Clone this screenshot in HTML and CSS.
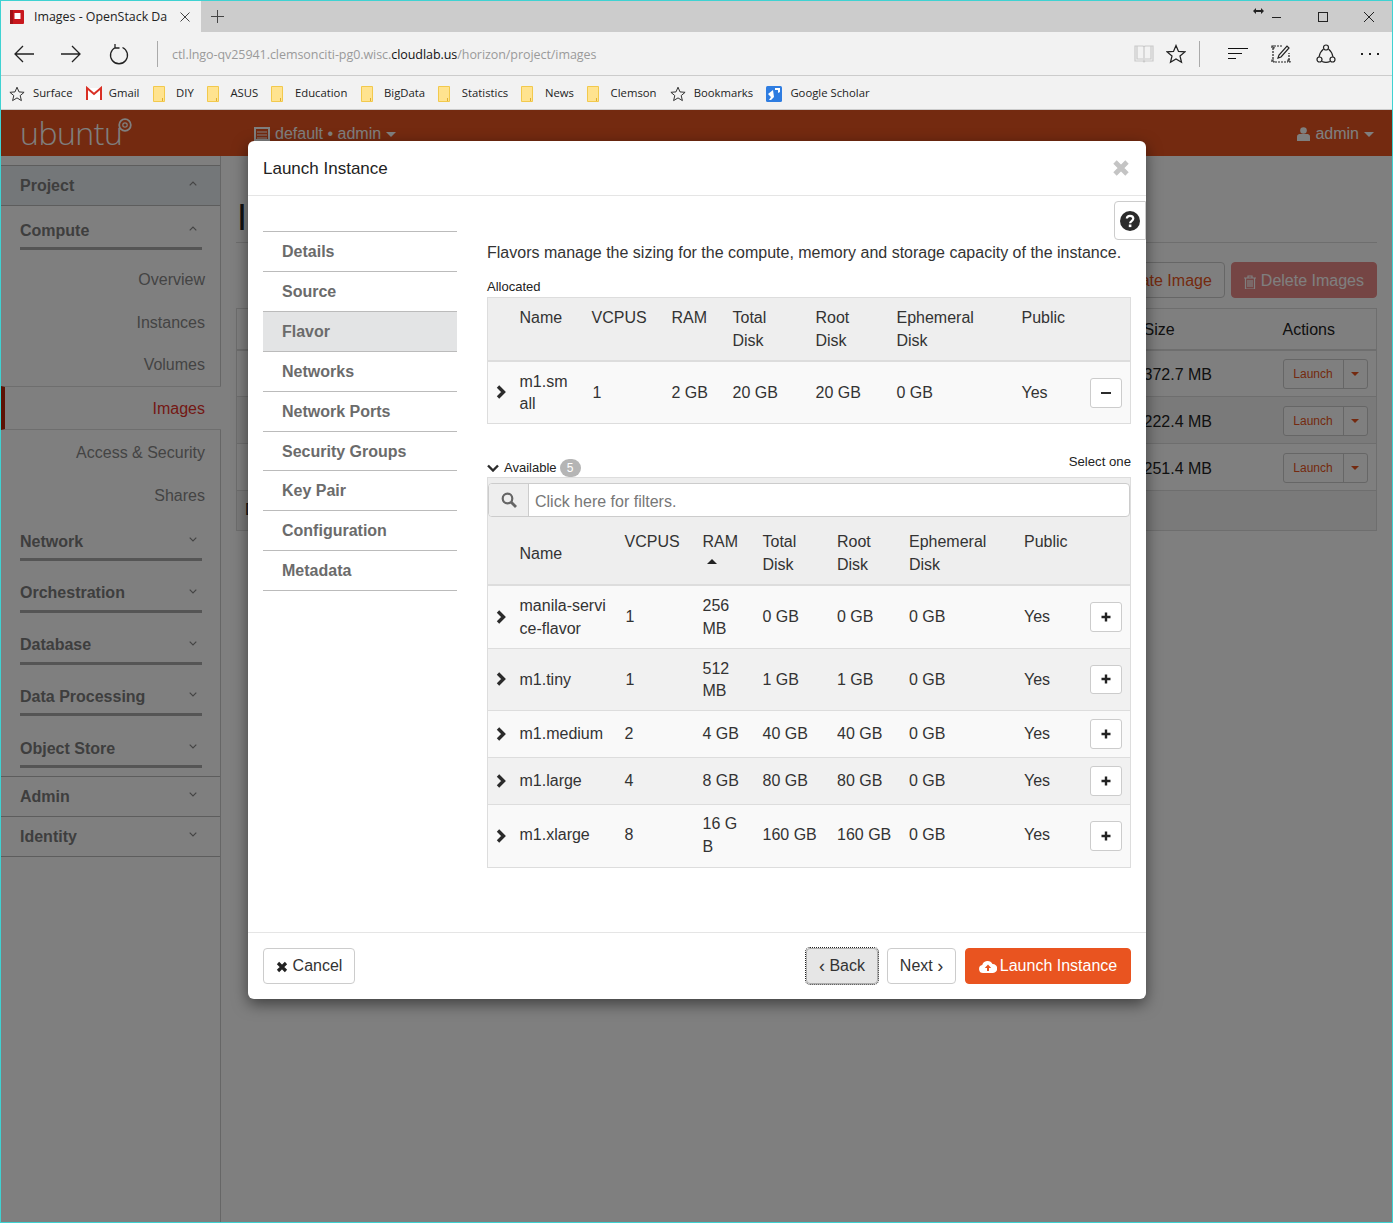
FILE: index.html
```html
<!DOCTYPE html>
<html lang="en">
<head>
<meta charset="utf-8">
<title>Images - OpenStack Dashboard</title>
<link rel="stylesheet" href="styles.css">
</head>
<body>
<svg class="defs" width="0" height="0" aria-hidden="true">
  <defs>
    <symbol id="star" viewBox="0 0 16 16"><path d="M8 1.2l2 4.7 5.1.4-3.9 3.3 1.2 5L8 11.9l-4.4 2.7 1.2-5L.9 6.3 6 5.9z" fill="none" stroke="currentColor" stroke-width="1"/></symbol>
    <symbol id="folder" viewBox="0 0 12 16"><path d="M.5.5h11v15H.5z" fill="#ffe38f" stroke="#f2c94c"/><path d="M9.5 15v-3" stroke="#e0b030" stroke-width="1"/></symbol>
    <symbol id="chev" viewBox="0 0 10 14"><path d="M2 1.5L7.5 7 2 12.5" fill="none" stroke="currentColor" stroke-width="3.400"/></symbol>
    <symbol id="plus" viewBox="0 0 10 10"><path d="M5 .5v9M.5 5h9" stroke="currentColor" stroke-width="2.400"/></symbol>
    <symbol id="caret" viewBox="0 0 10 5"><path d="M0 0h10L5 5z" fill="currentColor"/></symbol>
    <symbol id="caret-up" viewBox="0 0 10 5"><path d="M0 5h10L5 0z" fill="currentColor"/></symbol>
    <symbol id="times" viewBox="0 0 12 12"><path d="M2 2l8 8M10 2l-8 8" stroke="currentColor" stroke-width="3.2" fill="none"/></symbol>
    <symbol id="angle-up" viewBox="0 0 8 5"><path d="M.7 4.3L4 1l3.300 3.300" fill="none" stroke="currentColor" stroke-width="1.200"/></symbol>
    <symbol id="angle-down" viewBox="0 0 8 5"><path d="M.7.7L4 4 7.300.7" fill="none" stroke="currentColor" stroke-width="1.200"/></symbol>
  </defs>
</svg>
<div class="window">
  <header class="tabbar">
    <div class="tab">
      <svg class="favicon" viewBox="0 0 14 14"><rect width="14" height="14" rx="1" fill="#c8171d"/><rect y="0" width="3" height="14" fill="#a01216"/><rect x="4.500" y="3" width="6" height="6" fill="#fff"/></svg>
      <span class="tab-title">Images - OpenStack Da</span>
      <svg class="tab-close" viewBox="0 0 10 10"><path d="M.5.5l9 9M9.500.5l-9 9" stroke="#444" fill="none"/></svg>
    </div>
    <svg class="tab-new" viewBox="0 0 13 13"><path d="M6.500 0v13M0 6.500h13" stroke="#444" fill="none"/></svg>
    <div class="win-controls">
      <svg class="win-resize" viewBox="0 0 11 6"><path d="M0 3l3-3v2h5V0l3 3-3 3V4H3v2z" fill="#222"/></svg>
      <svg class="win-btn" viewBox="0 0 12 12"><path d="M1 6.500h9" stroke="#222" fill="none"/></svg>
      <svg class="win-btn" viewBox="0 0 12 12"><rect x="1.500" y="1.500" width="9" height="9" stroke="#222" fill="none"/></svg>
      <svg class="win-btn" viewBox="0 0 12 12"><path d="M1 1l10 10M11 1L1 11" stroke="#222" fill="none"/></svg>
    </div>
  </header>
  <div class="toolbar">
    <svg class="tool nav-back" viewBox="0 0 22 20"><path d="M21 10H2M10 2l-8 8 8 8" fill="none" stroke="#222" stroke-width="1.300"/></svg>
    <svg class="tool nav-fwd" viewBox="0 0 22 20"><path d="M1 10h19M12 2l8 8-8 8" fill="none" stroke="#222" stroke-width="1.300"/></svg>
    <svg class="tool nav-reload" viewBox="0 0 20 22"><path d="M6.500 4.500a8.500 8.500 0 1 0 7 0M6 1v4h4.500" fill="none" stroke="#222" stroke-width="1.300"/></svg>
    <span class="tool-sep sep-url"></span>
    <div class="url"><span>ctl.lngo-qv25941.clemsonciti-pg0.wisc.</span><span class="url-host">cloudlab.us</span><span>/horizon/project/images</span></div>
    <svg class="tool tool-book" viewBox="0 0 20 20"><path d="M1 2h8l1 1 1-1h8v15h-8l-1 1-1-1H1zM10 3v14M3 2v13h6M17 2v13h-6" fill="none" stroke="#c9c9c9" stroke-width="1.200"/></svg>
    <svg class="tool tool-star"><use href="#star"/></svg>
    <span class="tool-sep sep-hub"></span>
    <svg class="tool tool-hub" viewBox="0 0 20 14"><path d="M0 1.500h20M0 6.500h14M0 11.500h8" fill="none" stroke="#111" stroke-width="1"/></svg>
    <svg class="tool tool-note" viewBox="0 0 20 20"><path d="M1 2h2v2H1zM1 16h2v2H1zM17 16h2v2h-2zM2 4v12M4 18h13M18 16V9M3 2h9" fill="none" stroke="#222" stroke-width="1.200" stroke-dasharray="2 1"/><path d="M7 14l1-3 8-9 2 2-8 9z" fill="none" stroke="#222" stroke-width="1.200"/></svg>
    <svg class="tool tool-share" viewBox="0 0 20 20"><path d="M7.500 5C5 7 3.500 10 3 13M12.500 5c2.500 2 4 5 4.500 8M6 17.500c2.500 1 5.500 1 8 0" fill="none" stroke="#222" stroke-width="1.200"/><circle cx="10" cy="3.500" r="2.500" fill="none" stroke="#222" stroke-width="1.200"/><circle cx="3.500" cy="15.500" r="2.500" fill="none" stroke="#222" stroke-width="1.200"/><circle cx="16.500" cy="15.500" r="2.500" fill="none" stroke="#222" stroke-width="1.200"/></svg>
    <div class="tool-dots"><i></i><i></i><i></i></div>
  </div>
  <nav class="favbar">
    <a class="fav"><svg class="fav-ico"><use href="#star"/></svg>Surface</a>
    <a class="fav"><svg class="fav-ico fav-mail" viewBox="0 0 16 14"><path d="M0 1h16v12H0z" fill="#fff"/><path d="M1 13V1l7 6 7-6v12" fill="none" stroke="#d93025" stroke-width="2"/></svg>Gmail</a>
    <a class="fav"><svg class="fav-folder"><use href="#folder"/></svg>DIY</a>
    <a class="fav"><svg class="fav-folder"><use href="#folder"/></svg>ASUS</a>
    <a class="fav"><svg class="fav-folder"><use href="#folder"/></svg>Education</a>
    <a class="fav"><svg class="fav-folder"><use href="#folder"/></svg>BigData</a>
    <a class="fav"><svg class="fav-folder"><use href="#folder"/></svg>Statistics</a>
    <a class="fav"><svg class="fav-folder"><use href="#folder"/></svg>News</a>
    <a class="fav"><svg class="fav-folder"><use href="#folder"/></svg>Clemson</a>
    <a class="fav"><svg class="fav-ico"><use href="#star"/></svg>Bookmarks</a>
    <a class="fav"><svg class="fav-ico" viewBox="0 0 16 16"><rect width="16" height="16" rx="1.500" fill="#2f7de1"/><path d="M9 2h5v4l-2 1V4H9zM2 8l5-4 1 7-3 3H3l2-3z" fill="#fff"/></svg>Google Scholar</a>
  </nav>

  <div class="page">
    <div class="topnav">
      <div class="brand">ubuntu<svg class="brand-mark" viewBox="0 0 14 14"><circle cx="7" cy="7" r="5.800" fill="none" stroke="#fff" stroke-width="1.800"/><circle cx="7" cy="7" r="2.200" fill="none" stroke="#fff" stroke-width="1.200"/></svg></div>
      <div class="project-pick">
        <svg class="nav-ico" viewBox="0 0 16 14"><path d="M1 1h14v12H1z" fill="none" stroke="#fff" stroke-width="2"/><path d="M3 5h10M3 8h10M3 11h10" stroke="#fff"/></svg>
        default • admin
        <svg class="nav-caret"><use href="#caret"/></svg>
      </div>
      <div class="user-pick">
        <svg class="nav-user" viewBox="0 0 13 14"><circle cx="6.500" cy="3.500" r="3.300" fill="#fff"/><path d="M0 14V9.500C0 7.500 2 7 3.500 7h6C11 7 13 7.500 13 9.500V14z" fill="#fff"/></svg>
        admin
        <svg class="nav-caret"><use href="#caret"/></svg>
      </div>
    </div>
    <div class="shell">
      <aside class="sidebar">
        <div class="sb-head sb-head-open"><span>Project</span><svg class="sb-ang"><use href="#angle-up"/></svg></div>
        <div class="sb-group sb-first"><span>Compute</span><svg class="sb-ang"><use href="#angle-up"/></svg></div>
        <ul class="sb-items">
          <li>Overview</li>
          <li>Instances</li>
          <li class="sb-short">Volumes</li>
          <li class="sb-active">Images</li>
          <li class="sb-tall">Access &amp; Security</li>
          <li>Shares</li>
        </ul>
        <div class="sb-group sb-net"><span>Network</span><svg class="sb-ang"><use href="#angle-down"/></svg></div>
        <div class="sb-group"><span>Orchestration</span><svg class="sb-ang"><use href="#angle-down"/></svg></div>
        <div class="sb-group"><span>Database</span><svg class="sb-ang"><use href="#angle-down"/></svg></div>
        <div class="sb-group"><span>Data Processing</span><svg class="sb-ang"><use href="#angle-down"/></svg></div>
        <div class="sb-group"><span>Object Store</span><svg class="sb-ang"><use href="#angle-down"/></svg></div>
        <div class="sb-head sb-admin"><span>Admin</span><svg class="sb-ang"><use href="#angle-down"/></svg></div>
        <div class="sb-head sb-next"><span>Identity</span><svg class="sb-ang"><use href="#angle-down"/></svg></div>
      </aside>
      <main class="main">
        <div class="page-header"><h1>Images</h1></div>
        <div class="actions-row">
          <a class="btn-create">Create Image</a>
          <a class="btn-delete"><svg class="trash" viewBox="0 0 12 14"><path d="M0 3h12M4 3V1h4v2M1.500 3v11h9V3M4 5v7M6 5v7M8 5v7" fill="none" stroke="#fff" stroke-width="1.200"/></svg>Delete Images</a>
        </div>
        <table class="img-table">
          <colgroup><col><col class="img-size"><col class="img-act"></colgroup>
          <thead><tr><th></th><th>Size</th><th>Actions</th></tr></thead>
          <tbody>
            <tr><td></td><td>372.7 MB</td><td><span class="launch"><b>Launch</b><i><svg class="launch-caret"><use href="#caret"/></svg></i></span></td></tr>
            <tr class="img-alt"><td></td><td>222.4 MB</td><td><span class="launch"><b>Launch</b><i><svg class="launch-caret"><use href="#caret"/></svg></i></span></td></tr>
            <tr><td></td><td>251.4 MB</td><td><span class="launch"><b>Launch</b><i><svg class="launch-caret"><use href="#caret"/></svg></i></span></td></tr>
          </tbody>
          <tfoot><tr><td colspan="3">Displaying 3 items</td></tr></tfoot>
        </table>
      </main>
    </div>
    <div class="backdrop"></div>

    <section class="modal">
      <div class="modal-head">
        <h4>Launch Instance</h4>
        <svg class="modal-x"><use href="#times"/></svg>
      </div>
      <div class="modal-body">
        <ul class="wizard">
          <li>Details</li>
          <li>Source</li>
          <li class="wizard-on">Flavor</li>
          <li>Networks</li>
          <li>Network Ports</li>
          <li>Security Groups</li>
          <li>Key Pair</li>
          <li>Configuration</li>
          <li>Metadata</li>
        </ul>
        <div class="step">
          <a class="help-btn"><svg viewBox="0 0 20 20"><circle cx="10" cy="10" r="10" fill="#2b2b2b"/><path d="M6.800 7.500C7 5.500 8.500 4.800 10 4.800c2 0 3.300 1.200 3.300 2.800 0 2.600-3.200 2.400-3.200 4.700" fill="none" stroke="#fff" stroke-width="2.200"/><rect x="8.800" y="13.500" width="2.600" height="2.600" fill="#fff"/></svg></a>
          <p class="step-intro">Flavors manage the sizing for the compute, memory and storage capacity of the instance.</p>
          <div class="alloc-label">Allocated</div>
          <table class="tbl tbl-alloc">
            <colgroup><col class="a0"><col class="a1"><col class="a2"><col class="a3"><col class="a4"><col class="a5"><col class="a6"><col class="a7"><col></colgroup>
            <thead>
              <tr><th></th><th>Name</th><th>VCPUS</th><th>RAM</th><th>Total Disk</th><th>Root Disk</th><th>Ephemeral Disk</th><th>Public</th><th></th></tr>
            </thead>
            <tbody>
              <tr><td class="exp"><svg class="chev"><use href="#chev"/></svg></td><td>m1.small</td><td class="num">1</td><td>2 GB</td><td>20 GB</td><td>20 GB</td><td>0 GB</td><td>Yes</td><td class="act"><a class="rowbtn"><svg class="minus" viewBox="0 0 10 2"><rect width="10" height="2" fill="#2b2b2b"/></svg></a></td></tr>
            </tbody>
          </table>
          <div class="avail-head">
            <div class="avail-title"><svg class="avail-chev" viewBox="0 0 12 8"><path d="M1 1.500l5 5 5-5" fill="none" stroke="#2b2b2b" stroke-width="2.400"/></svg>Available<span class="badge">5</span></div>
            <div class="select-one">Select one</div>
          </div>
          <table class="tbl tbl-avail">
            <colgroup><col class="b0"><col class="b1"><col class="b2"><col class="b3"><col class="b4"><col class="b5"><col class="b6"><col class="b7"><col></colgroup>
            <thead>
              <tr class="filter-row"><th colspan="9">
                <div class="filter">
                  <span class="filter-ico"><svg viewBox="0 0 16 16"><circle cx="6.500" cy="6.500" r="4.800" fill="none" stroke="#666" stroke-width="2.200"/><path d="M10 10l5 5" stroke="#666" stroke-width="2.800"/></svg></span>
                  <span class="filter-text">Click here for filters.</span>
                </div>
              </th></tr>
              <tr class="col-row"><th></th><th class="th-mid">Name</th><th>VCPUS</th><th>RAM<svg class="sort-caret"><use href="#caret-up"/></svg></th><th>Total Disk</th><th>Root Disk</th><th>Ephemeral Disk</th><th>Public</th><th></th></tr>
            </thead>
            <tbody>
              <tr><td class="exp"><svg class="chev"><use href="#chev"/></svg></td><td>manila-service-flavor</td><td class="num">1</td><td>256 MB</td><td>0 GB</td><td>0 GB</td><td>0 GB</td><td>Yes</td><td class="act"><a class="rowbtn"><svg class="plus"><use href="#plus"/></svg></a></td></tr>
              <tr><td class="exp"><svg class="chev"><use href="#chev"/></svg></td><td>m1.tiny</td><td class="num">1</td><td>512 MB</td><td>1 GB</td><td>1 GB</td><td>0 GB</td><td>Yes</td><td class="act"><a class="rowbtn"><svg class="plus"><use href="#plus"/></svg></a></td></tr>
              <tr><td class="exp"><svg class="chev"><use href="#chev"/></svg></td><td>m1.medium</td><td>2</td><td>4 GB</td><td>40 GB</td><td>40 GB</td><td>0 GB</td><td>Yes</td><td class="act"><a class="rowbtn"><svg class="plus"><use href="#plus"/></svg></a></td></tr>
              <tr><td class="exp"><svg class="chev"><use href="#chev"/></svg></td><td>m1.large</td><td>4</td><td>8 GB</td><td>80 GB</td><td>80 GB</td><td>0 GB</td><td>Yes</td><td class="act"><a class="rowbtn"><svg class="plus"><use href="#plus"/></svg></a></td></tr>
              <tr><td class="exp"><svg class="chev"><use href="#chev"/></svg></td><td>m1.xlarge</td><td>8</td><td>16 GB</td><td>160 GB</td><td>160 GB</td><td>0 GB</td><td>Yes</td><td class="act"><a class="rowbtn"><svg class="plus"><use href="#plus"/></svg></a></td></tr>
            </tbody>
          </table>
        </div>
      </div>
      <div class="modal-foot">
        <a class="btn btn-cancel"><svg class="btn-x"><use href="#times"/></svg>Cancel</a>
        <span class="foot-space"></span>
        <a class="btn btn-back"><span class="ang">‹</span> Back</a>
        <a class="btn btn-next">Next <span class="ang">›</span></a>
        <a class="btn btn-launch"><svg class="cloud" viewBox="0 0 18 13"><path d="M4 13a4 4 0 0 1-.8-7.900A5.500 5.500 0 0 1 13.500 4 4.500 4.500 0 0 1 14 13z" fill="#fff"/><path d="M9 4.500L5.800 8H8v3h2V8h2.200z" fill="#e95420"/></svg>Launch Instance</a>
      </div>
    </section>
  </div>
</div>
</body>
</html>
```

FILE: styles.css
```css
* { box-sizing: border-box; }
html, body { margin: 0; padding: 0; }
body { font-family: "Liberation Sans", Arial, sans-serif; font-size: 16px; line-height: 1.42857; color: #333; }
ul { list-style: none; margin: 0; padding: 0; }
.defs { position: absolute; }

.window { width: 1393px; height: 1223px; border: 1px solid #3fd2d2; display: flex; flex-direction: column; overflow: hidden; background: #fff; }

/* browser chrome */
.tabbar { height: 31px; background: #ccc; display: flex; align-items: center; font-family: "Open Sans", sans-serif; flex: none; }
.tab { width: 200px; height: 31px; background: #f2f2f2; display: flex; align-items: center; padding-left: 9px; }
.favicon { width: 14px; height: 14px; margin-right: 10px; }
.tab-title { font-size: 12.400px; width: 135px; white-space: nowrap; overflow: hidden; color: #222; }
.tab-close { width: 10px; height: 10px; margin-left: 11px; }
.tab-new { width: 13px; height: 13px; margin-left: 10px; }
.win-controls { margin-left: auto; display: flex; align-items: center; padding-right: 17px; position: relative; }
.win-btn { width: 12px; height: 12px; margin-left: 34px; }
.win-resize { width: 11px; height: 6px; position: relative; top: -6px; left: 7px; margin-right: -20px; }

.toolbar { height: 44px; background: #f2f2f2; border-bottom: 1px solid #ccc; display: flex; align-items: center; flex: none; }
.tool { flex: none; }
.nav-back { width: 22px; height: 20px; margin-left: 12px; }
.nav-fwd { width: 22px; height: 20px; margin-left: 25px; }
.nav-reload { width: 20px; height: 22px; margin-left: 27px; }
.tool-sep { width: 1px; height: 26px; background: #aaa; flex: none; }
.sep-url { margin-left: 28px; }
.url { margin-left: 14px; font-family: "Open Sans", sans-serif; font-size: 12.500px; color: #9a9a9a; white-space: nowrap; letter-spacing: -.06px; padding-top: 3px; }
.url-host { color: #111; }
.tool-book { width: 20px; height: 20px; margin-left: auto; }
.tool-star { width: 20px; height: 20px; margin-left: 12px; color: #222; }
.sep-hub { margin-left: 13px; }
.tool-hub { width: 20px; height: 14px; margin-left: 28px; }
.tool-note { width: 20px; height: 20px; margin-left: 23px; }
.tool-share { width: 20px; height: 20px; margin-left: 25px; }
.tool-dots { display: flex; gap: 6px; margin-left: 25px; margin-right: 13px; }
.tool-dots i { width: 2px; height: 2px; background: #222; }

.favbar { height: 34px; background: #f2f2f2; border-bottom: 1px solid #ccc; display: flex; align-items: center; gap: 13.200px; padding: 2px 0 0 8px; font-family: "Open Sans", sans-serif; font-size: 11.300px; color: #222; flex: none; }
.fav { display: flex; align-items: center; white-space: nowrap; }
.fav-ico { width: 16px; height: 16px; margin-right: 8px; color: #333; }
.fav-mail { margin-right: 7px; }
.fav-folder { width: 12px; height: 16px; margin-right: 11.500px; }

/* page below the chrome */
.page { position: relative; flex: 1; display: flex; flex-direction: column; min-height: 0; }
.topnav { height: 46px; background: #e95420; color: #fff; display: flex; align-items: center; flex: none; }
.brand { font-family: "Open Sans", sans-serif; font-weight: 300; font-size: 32px; line-height: 46px; margin-left: 19px; width: 234px; position: relative; letter-spacing: -.5px; }
.brand-mark { width: 14px; height: 14px; position: absolute; left: 98px; top: 8px; }
.project-pick { display: flex; align-items: center; margin-top: 2px; }
.nav-ico { width: 16px; height: 14px; margin-right: 5px; }
.nav-caret { width: 10px; height: 5px; margin-left: 5px; color: #fff; }
.user-pick { margin-left: auto; margin-right: 18px; display: flex; align-items: center; margin-top: 2px; }
.nav-user { width: 13px; height: 14px; margin-right: 5px; }

.shell { flex: 1; display: flex; min-height: 0; }
.sidebar { width: 220px; flex: none; border-right: 1px solid #ccc; padding-top: 9px; background: #fff; font-weight: bold; color: #7c7c7c; }
.sb-ang { width: 8px; height: 5px; color: #888; margin-top: -5px; }
.sb-head { height: 41px; border-top: 1px solid #bbb; border-bottom: 1px solid #bbb; display: flex; align-items: center; justify-content: space-between; padding: 1px 23px 0 19px; margin-top: -1px; }
.sb-head-open { background: #e9eef2; margin-top: 0; }
.sb-admin { margin-top: 8px; }
.sb-group { height: 37px; margin: 14.750px 18px 0 19px; border-bottom: 3px solid #aaa; padding: 2px 5px 0 0; display: flex; align-items: center; justify-content: space-between; }
.sb-first { margin-top: 7px; }
.sb-net { margin-top: 7px; }
.sb-items { font-weight: normal; text-align: right; color: #888; margin-top: 8px; }
.sb-items li { height: 43px; line-height: 43px; padding-right: 15px; }
.sb-items .sb-short { height: 42px; line-height: 41px; }
.sb-items .sb-tall { height: 44px; line-height: 45px; }
.sb-items .sb-active { height: 44px; line-height: 44px; color: #e8322a; border-top: 1px solid #ddd; border-bottom: 1px solid #ddd; border-left: 4px solid #b8260c; background: #fff; margin-right: -1px; padding-right: 16px; }

.main { flex: 1; min-width: 0; padding: 0 15px; background: #fff; }
.page-header { height: 87px; border-bottom: 1px solid #ddd; display: flex; align-items: flex-end; }
.page-header h1 { margin: 0 0 4px; font-size: 36px; font-weight: 500; line-height: 40px; color: #222; padding-left: 1px; }
.actions-row { display: flex; justify-content: flex-end; gap: 6px; margin-top: 19px; height: 36px; }
.btn-create, .btn-delete { display: flex; align-items: center; border-radius: 4px; padding: 3px 12px 0; border: 1px solid #ccc; }
.btn-create { color: #e95420; background: #fff; }
.btn-delete { background: #eb8b88; border-color: #eb8b88; color: #fff; }
.trash { width: 12px; height: 14px; margin-right: 5px; }
.img-table { width: 100%; table-layout: fixed; border-collapse: collapse; margin-top: 10px; border: 1px solid #ddd; color: #222; }
.img-size { width: 139px; }
.img-act { width: 102px; }
.img-table th { font-weight: normal; text-align: left; padding: 10px 8px 6px; height: 41px; border-bottom: 2px solid #ddd; color: #222; }
.img-table td { padding: 10px 8px 6px; height: 47px; border-top: 1px solid #ddd; }
.img-table tfoot td { height: 40px; background: #f5f5f5; padding: 8px; }
.img-alt td { background: #f5f5f5; }
.launch { display: flex; width: 85px; height: 30px; margin: -2px 0 0; border: 1px solid #ccc; border-radius: 3px; font-size: 12px; color: #e95420; background: #fff; }
.launch b { font-weight: normal; width: 60px; text-align: center; line-height: 28px; border-right: 1px solid #ccc; }
.launch i { flex: 1; display: flex; align-items: center; justify-content: center; }
.launch-caret { width: 8px; height: 4px; }

.backdrop { position: absolute; inset: 0; background: rgba(0, 0, 0, .5); }

/* modal */
.modal { position: absolute; left: 247px; top: 31px; width: 898px; height: 858px; background: #fff; border-radius: 6px; box-shadow: 0 5px 15px rgba(0, 0, 0, .5); display: flex; flex-direction: column; color: #333; }
.modal-head { height: 55px; border-bottom: 1px solid #e5e5e5; display: flex; align-items: center; justify-content: space-between; padding: 3px 16px 0 15px; flex: none; }
.modal-head h4 { margin: 0; font-size: 17px; font-weight: normal; line-height: 1.2; color: #222; }
.modal-x { width: 18px; height: 18px; color: #c4c4c4; margin-top: -3px; }
.modal-body { flex: 1; display: flex; gap: 30px; padding: 35px 15px 0; min-height: 0; }
.wizard { width: 194px; flex: none; border-top: 1px solid #bbb; align-self: flex-start; font-weight: bold; color: #6b6b6b; margin-top: .4px; }
.wizard li { padding: 9px 19px 7px; border-bottom: 1px solid #bbb; }
.wizard .wizard-on { background: #e3e4e5; }
.step { flex: 1; min-width: 0; position: relative; margin-top: 11px; }
.help-btn { position: absolute; right: -15px; top: -41px; width: 32px; height: 39px; border: 1px solid #ccc; border-radius: 4px 0 0 4px; background: #fff; display: flex; align-items: center; justify-content: center; }
.help-btn svg { width: 20px; height: 20px; }
.step-intro { margin: 0; }
.alloc-label { font-size: 13px; line-height: 18px; margin-top: 13px; color: #222; }
.tbl { width: 644px; table-layout: fixed; border-collapse: collapse; border: 1px solid #ddd; margin-top: 1px; }
.tbl th { font-weight: normal; text-align: left; vertical-align: top; padding: 8px; background: #eee; word-break: normal; }
.tbl td { padding: 8px; vertical-align: middle; word-break: break-all; border-top: 1px solid #ddd; background: #f9f9f9; }
.tbl thead tr:last-child th { border-bottom: 2px solid #ddd; }
.tbl-avail tbody tr:nth-child(even) td { background: #f1f1f1; }
.tbl .exp { padding: 8px 0 8px 8px; }
.tbl .num { padding-left: 9px; }
.chev { width: 10px; height: 14px; display: block; color: #2b2b2b; }
.tbl .act { padding: 8px 8px 8px 0; }
.tbl-alloc th { padding-top: 9px; padding-bottom: 7px; }
.tbl-alloc td { padding-top: 9px; padding-bottom: 7px; }
.tbl-alloc .act { padding-top: 9px; padding-bottom: 7px; }
.tbl-avail tbody tr:nth-child(-n+2) td:not(.act):not(.exp) { padding-top: 9px; padding-bottom: 7px; }
.rowbtn { width: 32px; height: 29.850px; margin-left: auto; border: 1px solid #ccc; border-radius: 3px; background: #fff; display: flex; align-items: center; justify-content: center; color: #222; }
.minus { width: 10px; height: 2px; }
.plus { width: 10px; height: 10px; }

.a0 { width: 24px; } .a1 { width: 72px; } .a2 { width: 80px; } .a3 { width: 61px; } .a4 { width: 83px; } .a5 { width: 81px; } .a6 { width: 125px; } .a7 { width: 75px; }
.b0 { width: 24px; } .b1 { width: 105px; } .b2 { width: 78px; } .b3 { width: 60px; } .b4 { width: 74.500px; } .b5 { width: 72px; } .b6 { width: 115px; } .b7 { width: 73px; }

.avail-head { display: flex; justify-content: space-between; align-items: center; height: 20px; margin-top: 33px; font-size: 13px; color: #222; }
.avail-title { display: flex; align-items: center; margin-top: 2px; }
.avail-chev { width: 12px; height: 8px; margin-right: 5px; }
.badge { background: #b5b5b5; color: #fff; border-radius: 9px; width: 21px; height: 18px; line-height: 18px; text-align: center; font-size: 12px; margin-left: 3px; }
.select-one { font-size: 13.200px; margin-top: -9px; }
.tbl-avail { margin-top: 0; }
.tbl .filter-row th { padding: 5px 0 0; }
.filter { display: flex; height: 34px; border: 1px solid #ccc; border-radius: 4px; background: #fff; overflow: hidden; }
.filter-ico { width: 40px; background: #eee; border-right: 1px solid #ccc; display: flex; align-items: center; justify-content: center; }
.filter-ico svg { width: 16px; height: 16px; }
.filter-text { color: #777; padding: 2px 0 0 6px; line-height: 32px; }
.tbl .col-row th { padding-top: 14px; padding-bottom: 7px; }
.tbl .col-row .th-mid { vertical-align: middle; }
.sort-caret { display: block; width: 10px; height: 5px; margin: 5px 0 0 4px; color: #222; }
.tbl .col-row th:nth-child(4) { white-space: nowrap; }

.modal-foot { height: 67px; border-top: 1px solid #e5e5e5; display: flex; align-items: center; gap: 8px; padding: 0 15px 1px; flex: none; }
.foot-space { flex: 1; }
.btn { height: 36px; display: flex; align-items: center; justify-content: center; border: 1px solid #ccc; border-radius: 4px; background: #fff; color: #333; white-space: pre; padding-top: 2px; }
.btn-cancel { width: 92px; }
.btn-x { width: 12px; height: 12px; margin-right: 5px; color: #222; }
.btn-back { width: 72px; margin: 0 1px; background: #e6e6e6; border-color: #adadad; outline: 1px dotted #222; outline-offset: 0; }
.btn-next { width: 69px; }
.btn-launch { width: 166px; background: #e95420; border-color: #e95420; color: #fff; margin-left: 1px; }
.ang { font-size: 18px; line-height: 1; position: relative; top: -1px; }
.cloud { width: 18px; height: 13px; margin-right: 3px; }
```
